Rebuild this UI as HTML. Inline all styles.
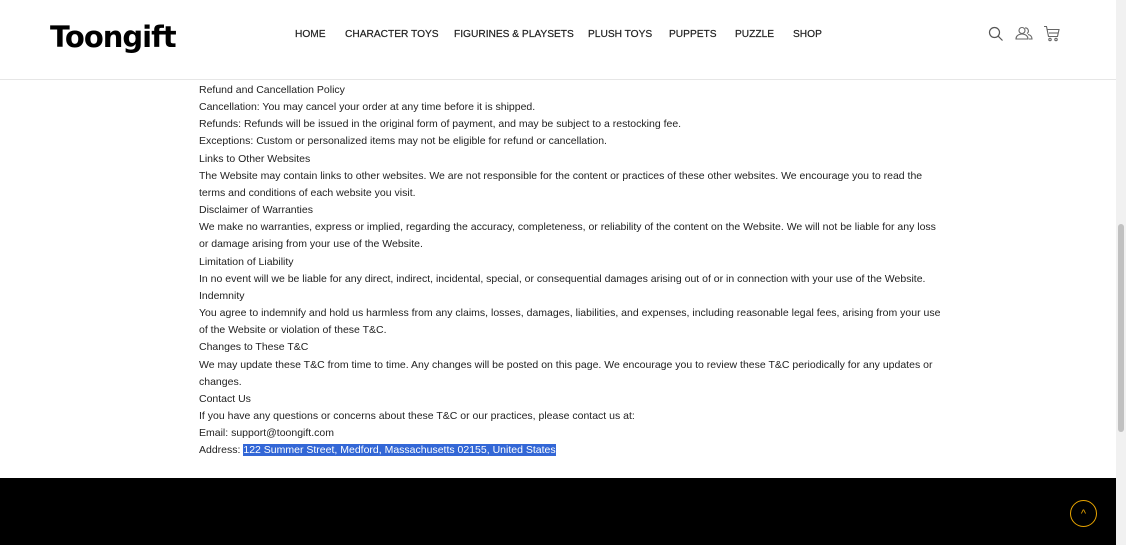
<!DOCTYPE html>
<html><head><style>
*{margin:0;padding:0;box-sizing:border-box}
body{width:1126px;height:545px;overflow:hidden;background:#fff;font-family:"Liberation Sans",Arial,sans-serif;position:relative}
.hdr{position:absolute;left:0;top:0;width:1116px;height:80px;border-bottom:1px solid #e6e6e6;background:#fff}
.logo{position:absolute;left:50px;top:20px;font-family:"DejaVu Sans",sans-serif;font-weight:900;font-size:29px;letter-spacing:-1px;color:#000}
.nav{position:absolute;top:29px;left:295px;font-size:10.2px;color:#222;white-space:nowrap;-webkit-text-stroke:0.2px #222}
.nav span{position:absolute;top:0}
.content{position:absolute;left:199px;top:82px;width:745px;font-size:10.5px;line-height:17.15px;color:#222}
.foot{position:absolute;left:0;top:478px;width:1116px;height:67px;background:#000}
.sb{position:absolute;left:1116px;top:0;width:10px;height:545px;background:#f1f1f1}
.thumb{position:absolute;left:1118px;top:224px;width:6px;height:208px;background:#c1c1c1;border-radius:3px}
.sel{background:#3367d6;color:#fff}
</style></head><body>
<div class="hdr">
<div class="logo">Toongift</div>
<div class="nav">
<span style="left:0">HOME</span>
<span style="left:50px">CHARACTER TOYS</span>
<span style="left:159px">FIGURINES &amp; PLAYSETS</span>
<span style="left:293px">PLUSH TOYS</span>
<span style="left:374px">PUPPETS</span>
<span style="left:440px">PUZZLE</span>
<span style="left:498px">SHOP</span>
</div>
<svg style="position:absolute;left:988px;top:26px" width="16" height="16" viewBox="0 0 16 16" fill="none" stroke="#555" stroke-width="1.2"><circle cx="6.5" cy="6.5" r="5"/><path d="M10.3 10.3L14.5 14.5"/></svg>
<svg style="position:absolute;left:1015px;top:26px" width="18" height="15" viewBox="0 0 18 15" fill="none" stroke="#666" stroke-width="1.1"><circle cx="7" cy="4.5" r="3"/><path d="M1 13c0-3 2.5-5 6-5s6 2 6 5z"/><path d="M10 2a3 3 0 0 1 2 5.5M13 8.5c2.5.5 4 2 4 4.5h-3"/></svg>
<svg style="position:absolute;left:1043px;top:25px" width="17" height="17" viewBox="0 0 17 17" fill="none" stroke="#666" stroke-width="1.1"><path d="M1 1.5h2.5l2 10h9l1.5-7H4.2"/><path d="M6 8h9"/><circle cx="7" cy="14.5" r="1.2"/><circle cx="13" cy="14.5" r="1.2"/></svg>
</div>
<div class="content">
Refund and Cancellation Policy<br>
Cancellation: You may cancel your order at any time before it is shipped.<br>
Refunds: Refunds will be issued in the original form of payment, and may be subject to a restocking fee.<br>
Exceptions: Custom or personalized items may not be eligible for refund or cancellation.<br>
Links to Other Websites<br>
The Website may contain links to other websites. We are not responsible for the content or practices of these other websites. We encourage you to read the<br>terms and conditions of each website you visit.<br>
Disclaimer of Warranties<br>
We make no warranties, express or implied, regarding the accuracy, completeness, or reliability of the content on the Website. We will not be liable for any loss<br>or damage arising from your use of the Website.<br>
Limitation of Liability<br>
In no event will we be liable for any direct, indirect, incidental, special, or consequential damages arising out of or in connection with your use of the Website.<br>
Indemnity<br>
You agree to indemnify and hold us harmless from any claims, losses, damages, liabilities, and expenses, including reasonable legal fees, arising from your use<br>of the Website or violation of these T&amp;C.<br>
Changes to These T&amp;C<br>
We may update these T&amp;C from time to time. Any changes will be posted on this page. We encourage you to review these T&amp;C periodically for any updates or<br>changes.<br>
Contact Us<br>
If you have any questions or concerns about these T&amp;C or our practices, please contact us at:<br>
Email: support@toongift.com<br>
Address: <span class="sel">122 Summer Street, Medford, Massachusetts 02155, United States</span>
</div>
<div class="foot">
<div style="position:absolute;left:1070px;top:22px;width:27px;height:27px;border:1.5px solid #e8a400;border-radius:50%;color:#e8a400;font-size:11px;text-align:center;line-height:26px">^</div>
</div>
<div class="sb"></div><div class="thumb"></div>
</body></html>
